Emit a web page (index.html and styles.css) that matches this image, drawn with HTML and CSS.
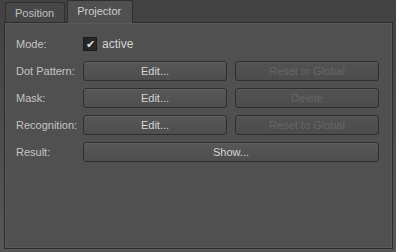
FILE: index.html
```html
<!DOCTYPE html>
<html lang="en">
<head>
    <meta charset="UTF-8">
    <title>Projector</title>
    <link rel="stylesheet" href="styles.css">
</head>
<body>

    <div class="tabs">
        <div class="tab">Position</div>
        <div class="tab active">Projector</div>
    </div>

    <div class="panel">
        <div class="label">Mode:</div>
        <div class="check-row">
            <span class="checkbox">&#10004;</span>
            <span class="check-text">active</span>
        </div>

        <div class="label">Dot Pattern:</div>
        <button class="btn">Edit...</button>
        <button class="btn" disabled>Reset to Global</button>

        <div class="label">Mask:</div>
        <button class="btn">Edit...</button>
        <button class="btn" disabled>Delete</button>

        <div class="label">Recognition:</div>
        <button class="btn">Edit...</button>
        <button class="btn" disabled>Reset to Global</button>

        <div class="label">Result:</div>
        <button class="btn wide">Show...</button>
    </div>

</body>
</html>
```

FILE: styles.css
```css
body {
    margin: 0;
    width: 396px;
    height: 252px;
    background: linear-gradient(#424242, #434343 30px, #575757);
    font-family: "Liberation Sans", Arial, sans-serif;
    font-size: 11px;
    color: #c4c4c4;
    overflow: hidden;
}
.tabs {
    display: flex;
    align-items: flex-end;
    gap: 2px;
    height: 22px;
    padding-left: 5px;
}
.tab {
    height: 19px;
    line-height: 20px;
    padding: 0 10px 0 9px;
    background: #474747;
    border: 1px solid #2e2e2e;
    border-bottom: none;
    border-radius: 3px 3px 0 0;
    color: #c0c0c0;
    font-size: 11px;
}
.tab.active {
    height: 22px;
    line-height: 20px;
    padding: 0 11px 0 9px;
    background: #505050;
    color: #cecece;
    position: relative;
    z-index: 1;
    margin-bottom: -1px;
}
.panel {
    margin-left: 4px;
    width: 389px;
    height: 227px;
    box-sizing: border-box;
    background: #505050;
    border: 1px solid #2c2c2c;
    box-shadow: inset 0 0 0 1px #5a5a5a;
    padding: 11px 13px 0 11px;
    display: grid;
    grid-template-columns: 59px 1fr 1fr;
    grid-auto-rows: 20px;
    column-gap: 8px;
    row-gap: 7px;
    align-content: start;
}
.label {
    line-height: 20px;
    white-space: nowrap;
}
.check-row {
    grid-column: 2 / 4;
    display: flex;
    align-items: center;
    gap: 5px;
}
.checkbox {
    width: 12px;
    height: 12px;
    background: #262626;
    border: 1px solid #1c1c1c;
    color: #e0e0e0;
    font-size: 11px;
    line-height: 12px;
    text-align: center;
}
.check-text {
    color: #d2d2d2;
    font-size: 12px;
}
.btn {
    font-family: "Liberation Sans", Arial, sans-serif;
    font-size: 11px;
    color: #d6d6d6;
    background: linear-gradient(#575757, #4e4e4e);
    border: 1px solid #2e2e2e;
    border-radius: 3px;
    box-shadow: inset 0 1px 0 #626262;
    padding: 0;
    height: 20px;
}
.btn:disabled {
    color: #666666;
    background: linear-gradient(#525252, #4c4c4c);
    box-shadow: inset 0 1px 0 #5a5a5a;
}
.btn.wide {
    grid-column: 2 / 4;
}
```
